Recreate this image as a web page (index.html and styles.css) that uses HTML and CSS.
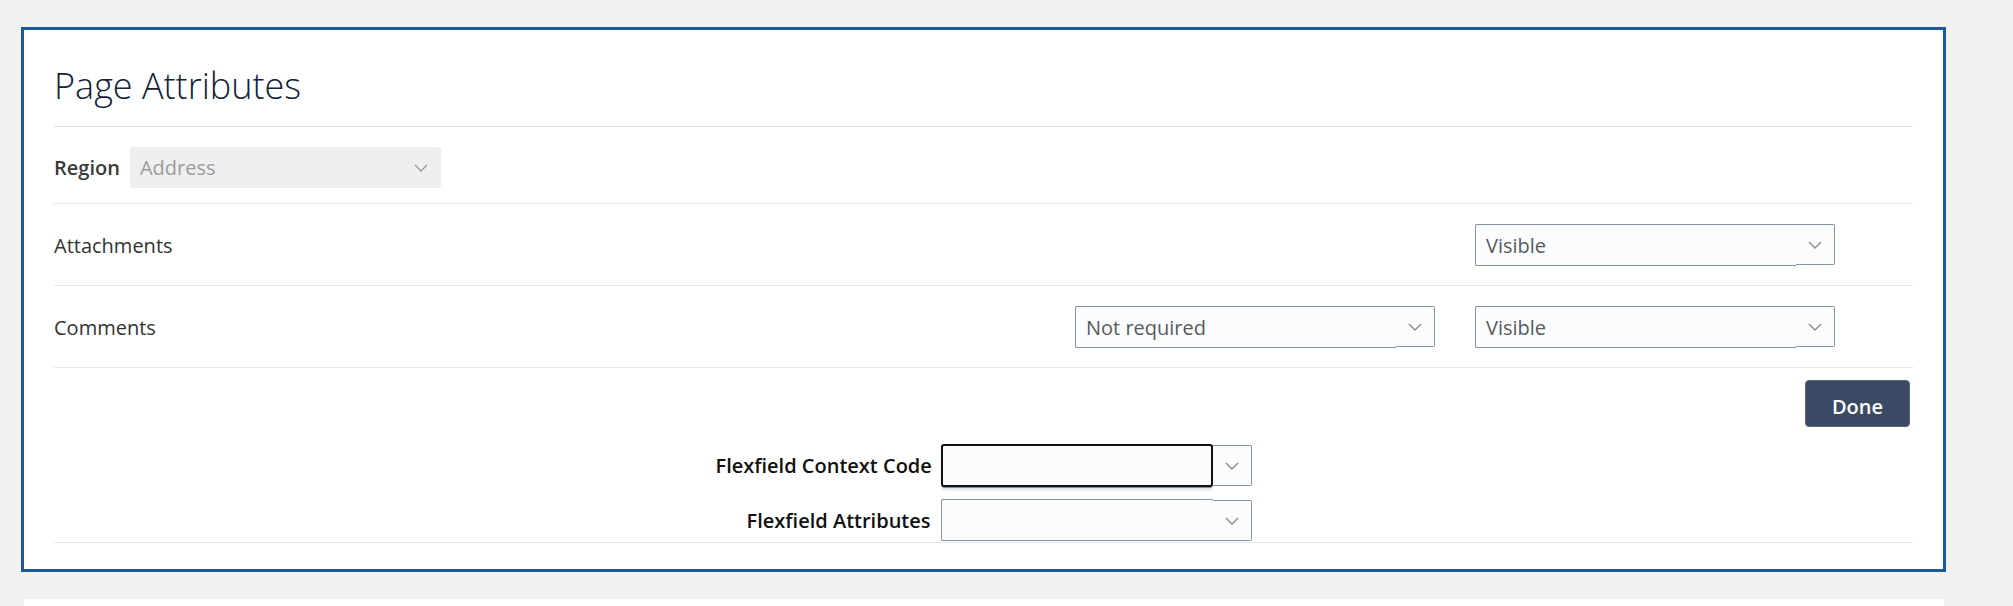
FILE: index.html
```html
<!DOCTYPE html>
<html lang="en">
<head>
<meta charset="utf-8">
<title>Page Attributes</title>
<link rel="stylesheet" href="styles.css">
</head>
<body>
<div class="panel">
  <div class="header">
    <h1 class="title">Page Attributes</h1>
  </div>

  <div class="row row-region">
    <span class="label-strong">Region</span>
    <div class="select select-disabled">
      <span class="select-input">Address</span>
      <span class="select-btn"><svg width="14" height="8" viewBox="0 0 14 8"><path d="M1 1l6 6 6-6" fill="none" stroke="#9a9a9a" stroke-width="1.4"/></svg></span>
    </div>
  </div>

  <div class="row row-attr">
    <span class="label">Attachments</span>
    <div class="cell"></div>
    <div class="cell">
      <div class="select">
        <span class="select-input">Visible</span>
        <span class="select-btn"><svg width="14" height="8" viewBox="0 0 14 8"><path d="M1 1l6 6 6-6" fill="none" stroke="#8a8a8a" stroke-width="1.4"/></svg></span>
      </div>
    </div>
  </div>

  <div class="row row-attr">
    <span class="label">Comments</span>
    <div class="cell">
      <div class="select">
        <span class="select-input">Not required</span>
        <span class="select-btn"><svg width="14" height="8" viewBox="0 0 14 8"><path d="M1 1l6 6 6-6" fill="none" stroke="#8a8a8a" stroke-width="1.4"/></svg></span>
      </div>
    </div>
    <div class="cell">
      <div class="select">
        <span class="select-input">Visible</span>
        <span class="select-btn"><svg width="14" height="8" viewBox="0 0 14 8"><path d="M1 1l6 6 6-6" fill="none" stroke="#8a8a8a" stroke-width="1.4"/></svg></span>
      </div>
    </div>
  </div>

  <div class="actions">
    <button class="btn-done" type="button">Done</button>
  </div>

  <div class="flex-section">
    <div class="flex-form">
      <label class="flex-label">Flexfield Context Code</label>
      <div class="select select-flex">
        <span class="select-input focused"></span>
        <span class="select-btn"><svg width="14" height="8" viewBox="0 0 14 8"><path d="M1 1l6 6 6-6" fill="none" stroke="#8a8a8a" stroke-width="1.4"/></svg></span>
      </div>
      <label class="flex-label">Flexfield Attributes</label>
      <div class="select select-flex">
        <span class="select-input"></span>
        <span class="select-btn"><svg width="14" height="8" viewBox="0 0 14 8"><path d="M1 1l6 6 6-6" fill="none" stroke="#8a8a8a" stroke-width="1.4"/></svg></span>
      </div>
    </div>
  </div>
</div>
<div class="panel-next"></div>
</body>
</html>
```

FILE: styles.css
```css
html, body {
  margin: 0;
  padding: 0;
  overflow: hidden;
}
body {
  background: #f1f1f1;
  font-family: "Open Sans", "Noto Sans", "Liberation Sans", sans-serif;
  color: #333;
}
.panel {
  margin: 27px 0 0 21px;
  width: 1859px;
  height: 539px;
  padding: 0 30px;
  background: #fff;
  border: 3px solid #1a5a9b;
}
.header {
  padding: 36px 0 20px;
  border-bottom: 1px solid #dce1e6;
}
.title {
  margin: 0;
  font-size: 36px;
  line-height: 40px;
  font-weight: 300;
  color: #13213a;
}
.row {
  display: flex;
  align-items: center;
  border-bottom: 1px solid #e8e8e8;
}
.row-region {
  padding: 20px 0 15px;
  gap: 10px;
}
.row-attr {
  padding: 20px 78px 19px 0;
  gap: 40px;
}
.label-strong {
  font-size: 20px;
  font-weight: 600;
  color: #3a3a3a;
}
.label {
  flex: 1;
  font-size: 20px;
  color: #333;
}
.cell {
  width: 360px;
}
.select {
  display: flex;
  align-items: flex-start;
  height: 42px;
}
.select-input {
  flex: 1;
  height: 42px;
  box-sizing: border-box;
  border: 1px solid #8594a2;
  border-right: none;
  border-radius: 2px 0 0 2px;
  background: #fbfcfd;
  padding: 0 10px;
  font-size: 20px;
  line-height: 41px;
  color: #5a5a5a;
}
.select-btn {
  width: 39px;
  height: 41px;
  box-sizing: border-box;
  border: 1px solid #8594a2;
  border-left: none;
  border-radius: 0 2px 2px 0;
  background: #fbfcfd;
  display: flex;
  align-items: center;
  justify-content: center;
}
.select-disabled {
  width: 311px;
  height: 41px;
}
.select-disabled .select-input,
.select-disabled .select-btn {
  border: none;
  background: #efeff1;
  height: 41px;
  color: #9b9b9b;
  line-height: 41px;
}
.select-disabled .select-input {
  border-radius: 2px 0 0 2px;
}
.actions {
  display: flex;
  justify-content: flex-end;
  padding: 12px 3px 0 0;
}
.btn-done {
  width: 105px;
  height: 47px;
  border: 1px solid #5a6680;
  border-radius: 4px;
  background: #3a4964;
  color: #fff;
  font-family: "Open Sans", "Noto Sans", sans-serif;
  font-size: 20px;
  font-weight: 600;
  line-height: 47px;
  padding: 2px 0 0;
}
.flex-section {
  padding-top: 17px;
  border-bottom: 1px solid #e8e8e8;
}
.flex-form {
  display: grid;
  grid-template-columns: 215px 311px;
  column-gap: 10px;
  row-gap: 12px;
  justify-content: center;
  align-items: center;
}
.flex-label {
  text-align: right;
  font-size: 20px;
  font-weight: 600;
  color: #111;
  white-space: nowrap;
}
.select-flex {
  height: 43px;
}
.select-flex .select-btn {
  margin-top: 1px;
}
.select-flex .select-input.focused {
  height: 43px;
  border: 2px solid #111;
  border-radius: 3px;
  box-shadow: 0 2px 0 -1px #7d8fa3, 0 3px 3px rgba(0, 0, 0, 0.12);
}
.panel-next {
  margin: 27px 0 0 24px;
  width: 1920px;
  height: 7px;
  background: #fff;
}
```
